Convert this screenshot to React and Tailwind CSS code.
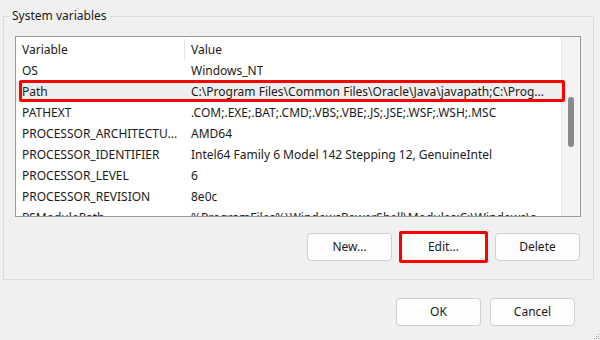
import React from "react";

const rows = [
  ["OS", "Windows_NT"],
  ["Path", "C:\\Program Files\\Common Files\\Oracle\\Java\\javapath;C:\\Prog..."],
  ["PATHEXT", ".COM;.EXE;.BAT;.CMD;.VBS;.VBE;.JS;.JSE;.WSF;.WSH;.MSC"],
  ["PROCESSOR_ARCHITECTU...", "AMD64"],
  ["PROCESSOR_IDENTIFIER", "Intel64 Family 6 Model 142 Stepping 12, GenuineIntel"],
  ["PROCESSOR_LEVEL", "6"],
  ["PROCESSOR_REVISION", "8e0c"],
  ["PSModulePath", "%ProgramFiles%\\WindowsPowerShell\\Modules;C:\\Windows\\s..."],
];

function Btn({ children, red }) {
  return (
    <div className="relative">
      <button className="w-[85px] h-[28px] bg-[#fdfdfd] border border-[#d0d0d0] rounded-[4px] text-[12px] text-[#1b1b1b]">
        {children}
      </button>
      {red && (
        <div className="absolute -inset-[2px] border-[3px] border-[#ff0000] rounded-[2px] pointer-events-none" />
      )}
    </div>
  );
}

export default function App() {
  return (
    <div
      className="w-[600px] h-[340px] bg-[#f0f0f0] overflow-hidden relative text-[#1b1b1b]"
      style={{ fontFamily: '"Noto Sans", "Open Sans", sans-serif' }}
    >
      <fieldset className="ml-[3px] mt-[7px] w-[591px] h-[273px] border border-[#dcdcdc]">
        <legend className="ml-[6px] px-[2px] text-[12px] leading-[18px]">System variables</legend>
        <div className="ml-[11px] mt-[11px] w-[566px] h-[181px] border border-[#9a9a9a] bg-white flex relative">
          <div className="flex-1 overflow-hidden">
            <div className="h-[23px] flex items-center text-[12px] pt-[2px]">
              <div className="w-[169px] pl-[6px] h-full flex items-center border-r border-[#e5e5e5]">Variable</div>
              <div className="pl-[6px]">Value</div>
            </div>
            {rows.map(([k, v]) => (
              <div
                key={k}
                className={`h-[21px] flex items-center text-[12px] whitespace-nowrap ${k === "Path" ? "bg-[#eeeeee]" : ""}`}
              >
                <div className="w-[169px] pl-[6px] overflow-hidden">{k}</div>
                <div className="pl-[6px] overflow-hidden">{v}</div>
              </div>
            ))}
          </div>
          <div className="w-[19px] h-full bg-[#f4f4f4] border-l border-[#e8e8e8] flex justify-center">
            <div className="mt-[60px] w-[6px] h-[50px] bg-[#8a8a8a] rounded-[3px]" />
          </div>
          <div className="absolute left-[3px] top-[43px] w-[546px] h-[22px] border-[3px] border-[#ff0000] rounded-[2px] pointer-events-none" />
        </div>
        <div className="mt-[16px] mr-[13px] flex justify-end gap-[9px]">
          <Btn>New...</Btn>
          <Btn red>Edit...</Btn>
          <Btn>Delete</Btn>
        </div>
      </fieldset>
      <div className="mt-[18px] mr-[25px] flex justify-end gap-[9px]">
        <Btn>OK</Btn>
        <Btn>Cancel</Btn>
      </div>
      <svg className="absolute right-0 bottom-0" width="6" height="6" viewBox="0 0 6 6">
        <rect x="4" y="0" width="1" height="1" fill="#a0a0a0" />
        <rect x="2" y="2" width="1" height="1" fill="#a0a0a0" />
        <rect x="4" y="2" width="1" height="1" fill="#a0a0a0" />
        <rect x="0" y="4" width="1" height="1" fill="#a0a0a0" />
        <rect x="2" y="4" width="1" height="1" fill="#a0a0a0" />
        <rect x="4" y="4" width="1" height="1" fill="#a0a0a0" />
      </svg>
    </div>
  );
}
